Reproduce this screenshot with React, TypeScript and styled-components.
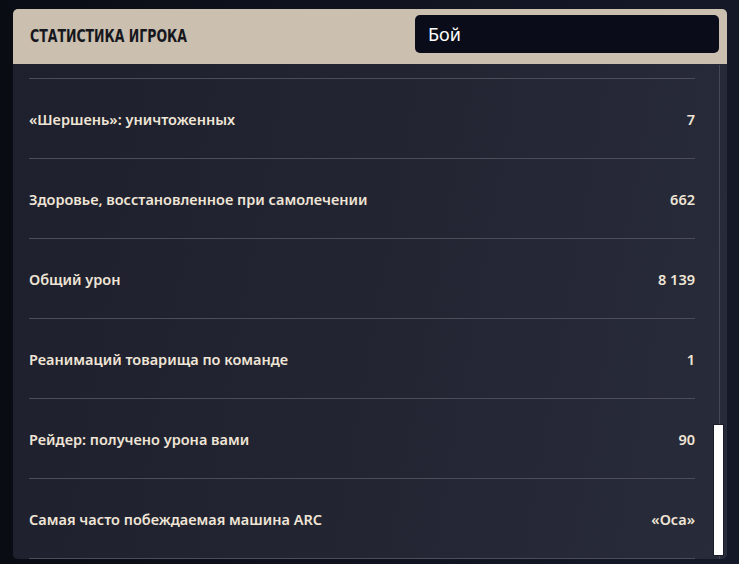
import React, { useLayoutEffect, useRef } from "react";
import styled, { createGlobalStyle } from "styled-components";

const Global = createGlobalStyle`
  html, body { margin: 0; padding: 0; height: 100%; }
  body {
    background: linear-gradient(90deg, #0a0c14 0%, #10131f 50%, #151827 100%);
    font-family: "Noto Sans", "Open Sans", sans-serif;
    overflow: hidden;
  }
`;

const Page = styled.div`
  padding: 9px 12px 0 13px;
  height: 564px;
  box-sizing: border-box;
`;

const Panel = styled.section`
  width: 714px;
  height: 550px;
  border-radius: 5px;
  overflow: hidden;
  display: flex;
  flex-direction: column;
  background: linear-gradient(100deg, #1e202d 0%, #232533 55%, #282b39 100%);
  position: relative;
`;

const Header = styled.header`
  height: 55px;
  flex: none;
  box-sizing: border-box;
  background: #cbbfaf;
  display: flex;
  align-items: flex-start;
  justify-content: space-between;
  padding: 0 8px 0 17px;
`;

const Title = styled.h1`
  margin: -2px 0 0;
  align-self: center;
  font-family: "DejaVu Sans", sans-serif;
  font-weight: 700;
  font-size: 18px;
  color: #16171d;
  text-transform: uppercase;
  white-space: nowrap;
  transform: scaleX(0.695);
  transform-origin: left center;
`;

const Select = styled.div`
  width: 304px;
  height: 38px;
  margin-top: 6px;
  box-sizing: border-box;
  border-radius: 5px;
  background: #0a0d19;
  color: #ffffff;
  font-family: "Noto Sans", sans-serif;
  font-size: 18px;
  display: flex;
  align-items: center;
  padding-left: 13px;
`;

const Body = styled.div`
  flex: 1;
  position: relative;
  margin-top: 1px;
  min-height: 0;
`;

const Scroller = styled.div`
  height: 100%;
  overflow-y: scroll;
  scrollbar-width: none;
  &::-webkit-scrollbar { display: none; }
`;

const List = styled.ul`
  list-style: none;
  margin: 0;
  padding: 0 32px 0 16px;
`;

const Row = styled.li`
  height: 78px;
  padding-top: 1px;
  border-bottom: 1px solid #4b4d5a;
  display: flex;
  align-items: center;
  justify-content: space-between;
  color: #efe5d6;
  font-size: 14.5px;
  font-weight: 600;
`;

const Label = styled.span``;
const Value = styled.span`
  text-align: right;
`;

const Track = styled.div`
  position: absolute;
  top: 0;
  bottom: 0;
  left: 706px;
  width: 1px;
  background: #464857;
`;

const Thumb = styled.div`
  position: absolute;
  left: 700px;
  width: 9px;
  height: 130px;
  background: #ffffff;
  border: 1px solid #1a1c27;
`;

const stats = [
  { label: "Урон по машинам ARC", value: "2 457" },
  { label: "«Шершень»: уничтоженных", value: "7" },
  { label: "Здоровье, восстановленное при самолечении", value: "662" },
  { label: "Общий урон", value: "8 139" },
  { label: "Реанимаций товарища по команде", value: "1" },
  { label: "Рейдер: получено урона вами", value: "90" },
  { label: "Самая часто побеждаемая машина ARC", value: "«Оса»" },
];

export default function App() {
  const ref = useRef<HTMLDivElement>(null);
  useLayoutEffect(() => {
    if (ref.current) ref.current.scrollTop = ref.current.scrollHeight;
  }, []);
  return (
    <>
      <Global />
      <Page>
        <Panel>
          <Header>
            <Title>Статистика игрока</Title>
            <Select>Бой</Select>
          </Header>
          <Body>
            <Scroller ref={ref}>
              <List>
                {stats.map((s) => (
                  <Row key={s.label}>
                    <Label>{s.label}</Label>
                    <Value>{s.value}</Value>
                  </Row>
                ))}
              </List>
            </Scroller>
            <Track />
            <Thumb style={{ top: 359 }} />
          </Body>
        </Panel>
      </Page>
    </>
  );
}
